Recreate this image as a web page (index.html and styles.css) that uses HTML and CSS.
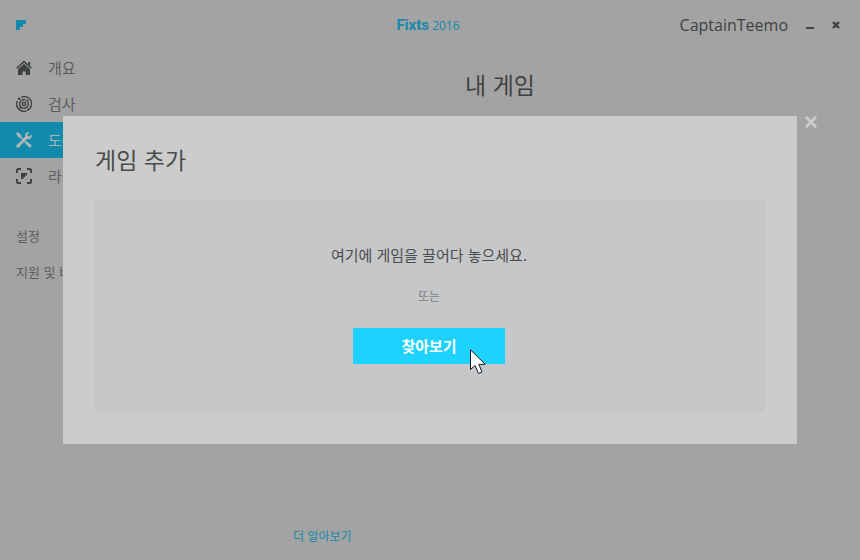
FILE: index.html
```html
<!DOCTYPE html>
<html lang="ko">
<head>
    <meta charset="UTF-8">
    <meta name="viewport" content="width=device-width, initial-scale=1.0">
    <title>Fixts 2016</title>
    <link rel="stylesheet" href="styles.css">
</head>
<body>

    <!-- Title bar -->
    <header class="titlebar">
        <svg class="logo" width="10" height="10" viewBox="0 0 10 10"><path d="M0 0H10V4H7V7H4V10H0Z"/></svg>
        <div class="brand"><strong>Fixts</strong> <span>2016</span></div>
        <div class="window-controls">
            <span class="username">CaptainTeemo</span>
            <button type="button" class="window-button" aria-label="최소화">
                <svg width="8" height="8" viewBox="0 0 8 8"><path d="M0 6H8V8H0Z"/></svg>
            </button>
            <button type="button" class="window-button" aria-label="닫기">
                <svg width="8" height="8" viewBox="0 0 8 8"><path d="M1 1L7 7M7 1L1 7" stroke="#3f4040" stroke-width="2.4"/></svg>
            </button>
        </div>
    </header>

    <div class="layout">
        <nav class="sidebar">
            <a href="#" class="nav-item">
                <svg width="16" height="16" viewBox="0 0 16 16">
                    <path d="M0.6 8.3L8 1.6L15.4 8.3" fill="none" stroke="#3f4242" stroke-width="1.5"/>
                    <path d="M12.2 2H14.2V6.2L12.2 4.4Z"/>
                    <path d="M8 3.8L14 9.2V15H9.6V11.5H6.6V15H2V9.2Z"/>
                </svg>
                <span>개요</span>
            </a>
            <a href="#" class="nav-item">
                <svg width="16" height="16" viewBox="0 0 16 16">
                    <g fill="none" stroke="#3f4242" stroke-width="1.4">
                        <path d="M5.4 1.2A7.2 7.2 0 0 1 12.6 13.6"/>
                        <path d="M10.6 14.8A7.2 7.2 0 0 1 1.4 5"/>
                        <path d="M11.9 6A4.4 4.4 0 1 1 9.4 3.8"/>
                        <circle cx="8" cy="8" r="1.7" stroke-width="1.5"/>
                    </g>
                    <circle cx="3.2" cy="2.8" r="1.3"/>
                    <circle cx="11.4" cy="4.6" r="1.2"/>
                    <circle cx="4.6" cy="11.4" r="1.2"/>
                    <circle cx="12" cy="13.8" r="1.1"/>
                </svg>
                <span>검사</span>
            </a>
            <a href="#" class="nav-item active">
                <svg width="16" height="16" viewBox="0 0 16 16">
                    <path d="M1.5 0L5.5 3.5L5.2 4.7L8.6 8L7.6 9L4.2 5.7L3 5.9L0 1.5Z"/>
                    <path d="M9.7 8.8L15.8 13.6L13.8 16L8.4 10.2Z"/>
                    <path d="M13.5 0.4L11.4 2.6L11.8 4.2L13.4 4.6L15.6 2.4C16.6 5.2 14.3 7.8 11.4 7L5.6 12.3L2.9 15.4C1.5 16.4 -0.6 14.5 0.6 13L4 10.3L9.2 4.6C8.4 1.6 10.9 -0.5 13.5 0.4Z"/>
                </svg>
                <span>도구</span>
            </a>
            <a href="#" class="nav-item">
                <svg width="16" height="16" viewBox="0 0 16 16">
                    <path d="M1 5V2.5Q1 1 2.5 1H5M11 1H13.5Q15 1 15 2.5V5M15 11V13.5Q15 15 13.5 15H11M5 15H2.5Q1 15 1 13.5V11" fill="none" stroke="#3f4242" stroke-width="2"/>
                    <path d="M5 5H11V7.5H9V9H7.5V11H5Z"/>
                </svg>
                <span>라이브</span>
            </a>
            <div class="nav-secondary">
                <a href="#" class="nav-link">설정</a>
                <a href="#" class="nav-link">지원 및 버전</a>
            </div>
        </nav>

        <main class="content">
            <h1>내 게임</h1>
            <a href="#" class="more-link">더 알아보기</a>
        </main>
    </div>

    <!-- Add game dialog -->
    <div class="overlay">
        <section class="modal" role="dialog" aria-labelledby="modalTitle">
            <button type="button" class="modal-close" aria-label="닫기">
                <svg width="12" height="12" viewBox="0 0 12 12"><path d="M1.8 1.8L10.2 10.2M10.2 1.8L1.8 10.2" stroke="#cccccc" stroke-width="3" stroke-linecap="round"/></svg>
            </button>
            <h2 id="modalTitle">게임 추가</h2>
            <div class="drop-zone">
                <p class="drop-text">여기에 게임을 끌어다 놓으세요.</p>
                <p class="drop-or">또는</p>
                <button type="button" class="browse-button">
                    찾아보기
                    <svg class="pointer" width="17" height="27" viewBox="0 0 17 27"><path d="M0.5 0.8V20.5L5 16.5L8.5 24.5L12 23L8.8 15.3H15.2Z" fill="#fff" stroke="#111a24"/></svg>
                </button>
            </div>
        </section>
    </div>

</body>
</html>
```
FILE: styles.css
```css
* {
    margin: 0;
    padding: 0;
    box-sizing: border-box;
}

body {
    font-family: "Open Sans", "Noto Sans CJK KR", sans-serif;
    min-height: 100vh;
    display: flex;
    flex-direction: column;
    background-color: #a3a3a3;
    color: #3f4242;
}

a {
    text-decoration: none;
}

button {
    border: none;
    background: none;
    cursor: pointer;
}

svg {
    display: block;
    flex-shrink: 0;
    fill: #3f4242;
}

.titlebar {
    display: grid;
    grid-template-columns: 1fr auto 1fr;
    align-items: center;
    height: 50px;
    padding: 0 20px 0 16px;
}

.logo {
    fill: #128aab;
}

.brand {
    font-size: 12px;
    color: #128aab;
}

.brand strong {
    font-family: Roboto, sans-serif;
    font-size: 15px;
}

.window-controls {
    display: flex;
    justify-content: flex-end;
    align-items: center;
    gap: 18px;
}

.username {
    font-size: 16px;
}

/* Sidebar */
.layout {
    flex: 1;
    display: flex;
}

.sidebar {
    width: 140px;
    font-family: "Noto Sans CJK KR", sans-serif;
}

.nav-item {
    display: flex;
    align-items: center;
    gap: 16px;
    height: 36px;
    padding-left: 16px;
    font-size: 15px;
    color: #5c5d5d;
}

.nav-item span {
    padding-bottom: 2px;
}

.nav-item.active {
    background-color: #128aab;
    color: #a9b5b9;
}

.nav-item.active svg {
    fill: #b0b7b9;
}

.nav-secondary {
    margin-top: 24px;
}

.nav-link {
    display: block;
    padding-left: 16px;
    font-size: 13px;
    line-height: 36px;
    color: #5c5d5d;
}

/* Content */
.content {
    flex: 1;
    display: flex;
    flex-direction: column;
    justify-content: space-between;
    padding: 18px 0 14px;
    font-family: "Noto Sans CJK KR", sans-serif;
}

h1, h2 {
    font-size: 23px;
    font-weight: 400;
    line-height: 32px;
}

h1 {
    text-align: center;
}

.more-link {
    align-self: flex-start;
    margin-left: 153px;
    font-size: 12px;
    line-height: 20px;
    color: #128aab;
}

/* Modal */
.overlay {
    position: fixed;
    inset: 0;
    display: flex;
    justify-content: center;
    align-items: center;
    padding: 0 63px;
    font-family: "Noto Sans CJK KR", sans-serif;
}

.modal {
    position: relative;
    width: 100%;
    padding: 27px 32px 32px;
    background-color: #cccccc;
    color: #4a4d4d;
}

.modal-close {
    position: absolute;
    top: 0;
    left: 100%;
    margin-left: 8px;
}

.drop-zone {
    display: flex;
    flex-direction: column;
    align-items: center;
    margin-top: 24px;
    padding: 44px 2px 48px 0;
    background-color: #c6c7c9;
}

.drop-text {
    font-size: 15px;
    line-height: 24px;
}

.drop-or {
    margin: 19px 0 22px;
    font-size: 12px;
    line-height: 20px;
    color: #7c7e7f;
}

.browse-button {
    position: relative;
    width: 152px;
    height: 36px;
    padding-bottom: 2px;
    background-color: #1dd2ff;
    color: #fff;
    font-family: inherit;
    font-size: 15px;
    font-weight: 700;
}

.pointer {
    position: absolute;
    top: 21px;
    left: 117px;
}
```
